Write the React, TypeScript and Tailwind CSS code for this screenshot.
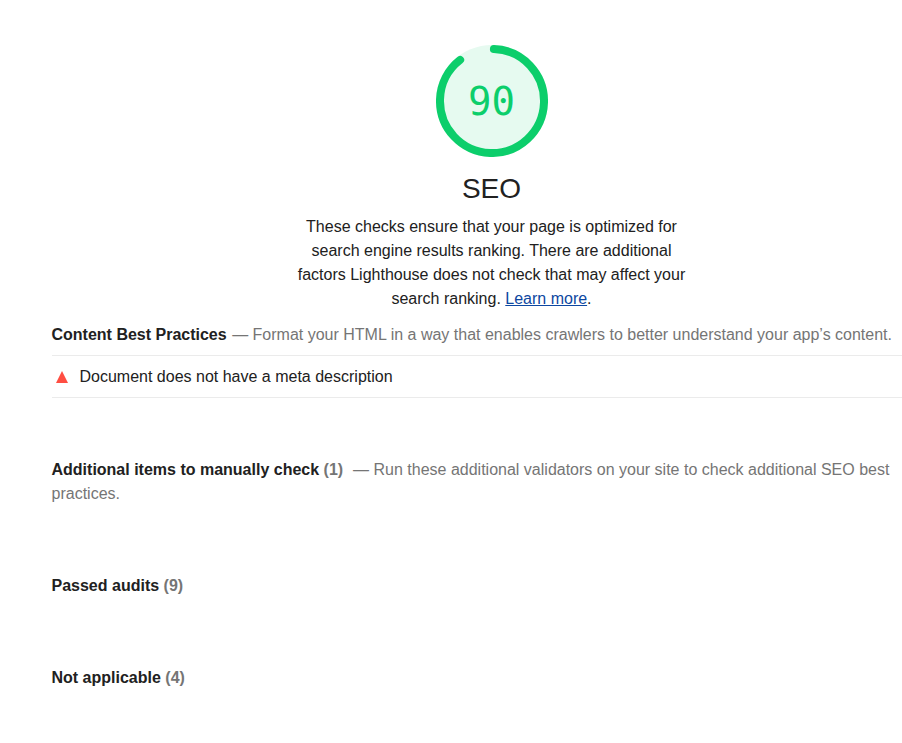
import type { ReactNode } from "react";

const Gauge = ({ score }: { score: number }) => {
  const radius = 52;
  const circumference = 2 * Math.PI * radius;

  return (
    <div className="relative w-28 h-28">
      <svg viewBox="0 0 112 112" className="w-28 h-28">
        <circle cx="56" cy="56" r="56" fill="#e6faf0" />
        <circle
          cx="56"
          cy="56"
          r={radius}
          fill="none"
          stroke="#0cce6b"
          strokeWidth="8"
          strokeLinecap="round"
          strokeDasharray={`${(score / 100) * circumference - 4} ${circumference}`}
          transform="rotate(-87.9 56 56)"
        />
      </svg>
      <span className="absolute inset-0 flex items-center justify-center pr-px font-['DejaVu_Sans_Mono',monospace] text-[39px] leading-none text-[#0cce6b]">
        {score}
      </span>
    </div>
  );
};

const ClumpTitle = ({ title, count, children }: { title: string; count?: number; children?: ReactNode }) => (
  <p className="-ml-[0.5px] text-[#757575]">
    <span className="font-bold text-[#212121]">{title}</span>
    {count !== undefined && <span className="font-bold"> ({count})</span>}
    {children}
  </p>
);

const App = () => {
  return (
    <main className="w-[902px] min-h-[743px] bg-white pl-[52px] pt-[45px] overflow-hidden font-['Liberation_Sans',Arial,sans-serif] text-base leading-6 text-[#212121]">
      <header className="flex flex-col items-center w-[400px] ml-[240px]">
        <Gauge score={90} />
        <h1 className="mt-3 pr-px text-[28px] leading-10">SEO</h1>
        <p className="mt-1.5 w-[400px] pr-px text-center">
          These checks ensure that your page is optimized for
          <br />
          search engine results ranking. There are additional
          <br />
          factors Lighthouse does not check that may affect your
          <br />
          search ranking. <a href="#" className="underline text-[#0d47a1]">Learn more</a>.
        </p>
      </header>

      <section className="mt-3">
        <ClumpTitle title="Content Best Practices">
          <span className="ml-px">
            {" "}— Format your HTML in a way that enables crawlers to better understand your app’s content.
          </span>
        </ClumpTitle>
        <div className="mt-2 flex items-center h-[43px] border-y border-[#ebebeb]">
          <svg viewBox="0 0 12 12" className="w-3 h-3 ml-1 mr-3">
            <path d="M6 0L12 12H0Z" fill="#ff4e42" />
          </svg>
          <span className="-ml-[0.5px]">Document does not have a meta description</span>
        </div>
      </section>

      <section className="mt-[60px]">
        <ClumpTitle title="Additional items to manually check" count={1}>
          <span className="ml-[5.5px]">
            {" "}— Run these additional validators on your site to check additional SEO best
            <br />
            practices.
          </span>
        </ClumpTitle>
      </section>

      <section className="mt-[68px]">
        <ClumpTitle title="Passed audits" count={9} />
      </section>

      <section className="mt-[68px]">
        <ClumpTitle title="Not applicable" count={4} />
      </section>
    </main>
  );
};

export default App;
